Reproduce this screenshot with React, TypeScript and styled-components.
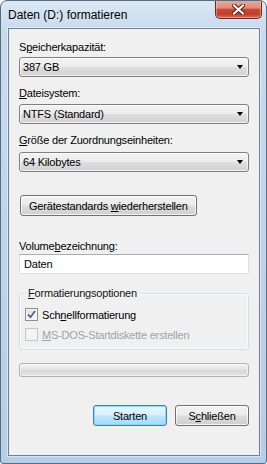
import React from 'react';
import styled, { createGlobalStyle } from 'styled-components';

const GlobalStyle = createGlobalStyle`
  html, body {
    margin: 0;
    padding: 0;
    background: #ffffff;
  }
  body {
    font-family: "Liberation Sans", Arial, sans-serif;
    color: #000000;
  }
`;

const Window = styled.div`
  width: 267px;
  height: 464px;
  box-sizing: border-box;
  border: 1px solid #5b6c7e;
  border-radius: 7px 7px 3px 3px;
  background: linear-gradient(180deg, #dbe8f5 0px, #c8daee 30px, #bdd3eb 60%, #b6cde6 100%);
  display: flex;
  flex-direction: column;
  overflow: hidden;
`;

const TitleBar = styled.div`
  height: 27px;
  display: flex;
  align-items: flex-start;
  justify-content: space-between;
  padding-left: 7px;
`;

const Title = styled.div`
  margin-top: 7px;
  font-size: 12px;
  line-height: 15px;
  color: #000000;
`;

const CloseButton = styled.div`
  width: 47px;
  height: 19px;
  margin-top: -1px;
  margin-right: 4px;
  box-sizing: border-box;
  border: 1px solid #6a2a1f;
  border-top: none;
  border-radius: 0 0 5px 5px;
  background: linear-gradient(180deg, #e9ad9f 0%, #dc8c7b 45%, #c84a33 52%, #bf3f2a 78%, #d6715a 100%);
  box-shadow: inset 0 0 0 1px rgba(255, 210, 200, 0.45);
  display: flex;
  align-items: center;
  justify-content: center;
`;

const Client = styled.div`
  flex: 1;
  margin: 0 6px 7px 7px;
  background: #f0f0f0;
  border: 1px solid #6f8193;
  box-shadow: 0 0 0 1px rgba(255, 255, 255, 0.45);
  display: flex;
  flex-direction: column;
  padding: 0 10px;
`;

const Label = styled.div<{ $top: number }>`
  margin-top: ${(p) => p.$top}px;
  font-size: 11px;
  line-height: 15px;
  letter-spacing: -0.2px;
  white-space: nowrap;
`;

const Combo = styled.div<{ $top: number }>`
  margin-top: ${(p) => p.$top}px;
  height: 20px;
  box-sizing: border-box;
  border: 1px solid #7f7f7f;
  border-radius: 3px;
  background: linear-gradient(180deg, #f3f3f3 0%, #ececec 48%, #dedede 52%, #d2d2d2 100%);
  box-shadow: inset 0 0 0 1px rgba(255, 255, 255, 0.7);
  display: flex;
  align-items: center;
  justify-content: space-between;
  padding: 0 4px 0 3px;
  font-size: 11px;
  letter-spacing: -0.2px;
`;

const Arrow = styled.span`
  width: 0;
  height: 0;
  border-left: 3.5px solid transparent;
  border-right: 3.5px solid transparent;
  border-top: 4px solid #000000;
  margin-right: 1px;
`;

const PushButton = styled.div<{ $default?: boolean; $width?: number }>`
  height: 21px;
  width: ${(p) => (p.$width ? `${p.$width}px` : 'auto')};
  box-sizing: border-box;
  padding: 0 8px;
  border: 1px solid ${(p) => (p.$default ? '#3c7fb1' : '#707070')};
  border-radius: 3px;
  background: ${(p) =>
    p.$default
      ? 'linear-gradient(180deg, #eaf6fd 0%, #d9f0fc 48%, #bee6fd 52%, #a7d9f5 100%)'
      : 'linear-gradient(180deg, #f2f2f2 0%, #ebebeb 48%, #dddddd 52%, #cfcfcf 100%)'};
  box-shadow: inset 0 0 0 1px ${(p) => (p.$default ? 'rgba(120, 215, 250, 0.8)' : 'rgba(255, 255, 255, 0.75)')};
  display: flex;
  align-items: center;
  justify-content: center;
  font-size: 11px;
  letter-spacing: -0.2px;
  white-space: nowrap;
`;

const ResetRow = styled.div`
  margin-top: 23px;
  padding-left: 1px;
  display: flex;
`;

const TextInput = styled.div`
  height: 20px;
  box-sizing: border-box;
  border: 1px solid #dbdfe6;
  border-top-color: #abadb3;
  background: #ffffff;
  display: flex;
  align-items: center;
  padding-left: 4px;
  font-size: 11px;
  letter-spacing: -0.2px;
`;

const GroupBox = styled.fieldset`
  margin: 13px 0 0 0;
  padding: 8px 5px 8px 5px;
  border: 1px solid #d5dfe5;
  border-radius: 3px;
  box-shadow: inset 0 0 0 1px rgba(255, 255, 255, 0.6);
  display: flex;
  flex-direction: column;
  gap: 7px;
`;

const Legend = styled.legend`
  margin-left: 1px;
  padding: 0 2px;
  font-size: 11px;
  line-height: 13px;
  letter-spacing: -0.2px;
  color: #151515;
`;

const CheckRow = styled.div<{ $disabled?: boolean }>`
  display: flex;
  align-items: center;
  gap: 4px;
  height: 13px;
  font-size: 11px;
  letter-spacing: -0.2px;
  color: ${(p) => (p.$disabled ? '#a2a2a2' : '#000000')};
`;

const CheckBox = styled.span<{ $disabled?: boolean }>`
  width: 13px;
  height: 13px;
  box-sizing: border-box;
  border: 1px solid ${(p) => (p.$disabled ? '#c9c9c9' : '#8e8f8f')};
  background: ${(p) =>
    p.$disabled ? '#f4f4f4' : 'linear-gradient(135deg, #dcdcdc 0%, #f2f2f2 60%, #ffffff 100%)'};
  box-shadow: inset 0 0 0 1px ${(p) => (p.$disabled ? '#f0f0f0' : '#f4f4f4')};
  display: flex;
  align-items: center;
  justify-content: center;
`;

const Progress = styled.div`
  margin-top: 13px;
  height: 14px;
  box-sizing: border-box;
  border: 1px solid #b2b2b2;
  border-radius: 3px;
  background: linear-gradient(180deg, #f3f3f3 0%, #e4e4e4 45%, #d9d9d9 55%, #e3e3e3 100%);
  box-shadow: inset 0 0 0 1px rgba(255, 255, 255, 0.55);
`;

const ButtonRow = styled.div`
  margin-top: 28px;
  display: flex;
  justify-content: flex-end;
  gap: 8px;
`;

const CloseGlyph = () => (
  <svg width="13" height="11" viewBox="0 0 13 11">
    <path d="M2 1.5 L11 9.5 M11 1.5 L2 9.5" stroke="#4a1a12" strokeWidth="4" strokeLinecap="square" />
    <path d="M2 1.5 L11 9.5 M11 1.5 L2 9.5" stroke="#ffffff" strokeWidth="2.2" strokeLinecap="square" />
  </svg>
);

const CheckMark = () => (
  <svg width="9" height="9" viewBox="0 0 9 9">
    <path d="M1 4.5 L3.5 7.2 L8 1" fill="none" stroke="#4a5f97" strokeWidth="1.8" />
  </svg>
);

const App = () => (
  <>
    <GlobalStyle />
    <Window>
      <TitleBar>
        <Title>Daten (D:) formatieren</Title>
        <CloseButton>
          <CloseGlyph />
        </CloseButton>
      </TitleBar>
      <Client>
        <Label $top={11}>
          S<u>p</u>eicherkapazität:
        </Label>
        <Combo $top={2}>
          387 GB
          <Arrow />
        </Combo>
        <Label $top={9}>
          <u>D</u>ateisystem:
        </Label>
        <Combo $top={3}>
          NTFS (Standard)
          <Arrow />
        </Combo>
        <Label $top={9}>
          <u>G</u>röße der Zuordnungseinheiten:
        </Label>
        <Combo $top={4}>
          64 Kilobytes
          <Arrow />
        </Combo>
        <ResetRow>
          <PushButton>
            Gerätestandards&nbsp;<u>w</u>iederherstellen
          </PushButton>
        </ResetRow>
        <Label $top={23}>
          Volume<u>b</u>ezeichnung:
        </Label>
        <TextInput>Daten</TextInput>
        <GroupBox>
          <Legend>
            <u>F</u>ormatierungsoptionen
          </Legend>
          <CheckRow>
            <CheckBox>
              <CheckMark />
            </CheckBox>
            <span>
              Sch<u>n</u>ellformatierung
            </span>
          </CheckRow>
          <CheckRow $disabled>
            <CheckBox $disabled />
            <span>
              <u>M</u>S-DOS-Startdiskette erstellen
            </span>
          </CheckRow>
        </GroupBox>
        <Progress />
        <ButtonRow>
          <PushButton $default $width={74}>
            Starten
          </PushButton>
          <PushButton $width={74}>
            S<u>c</u>hließen
          </PushButton>
        </ButtonRow>
      </Client>
    </Window>
  </>
);

export default App;
